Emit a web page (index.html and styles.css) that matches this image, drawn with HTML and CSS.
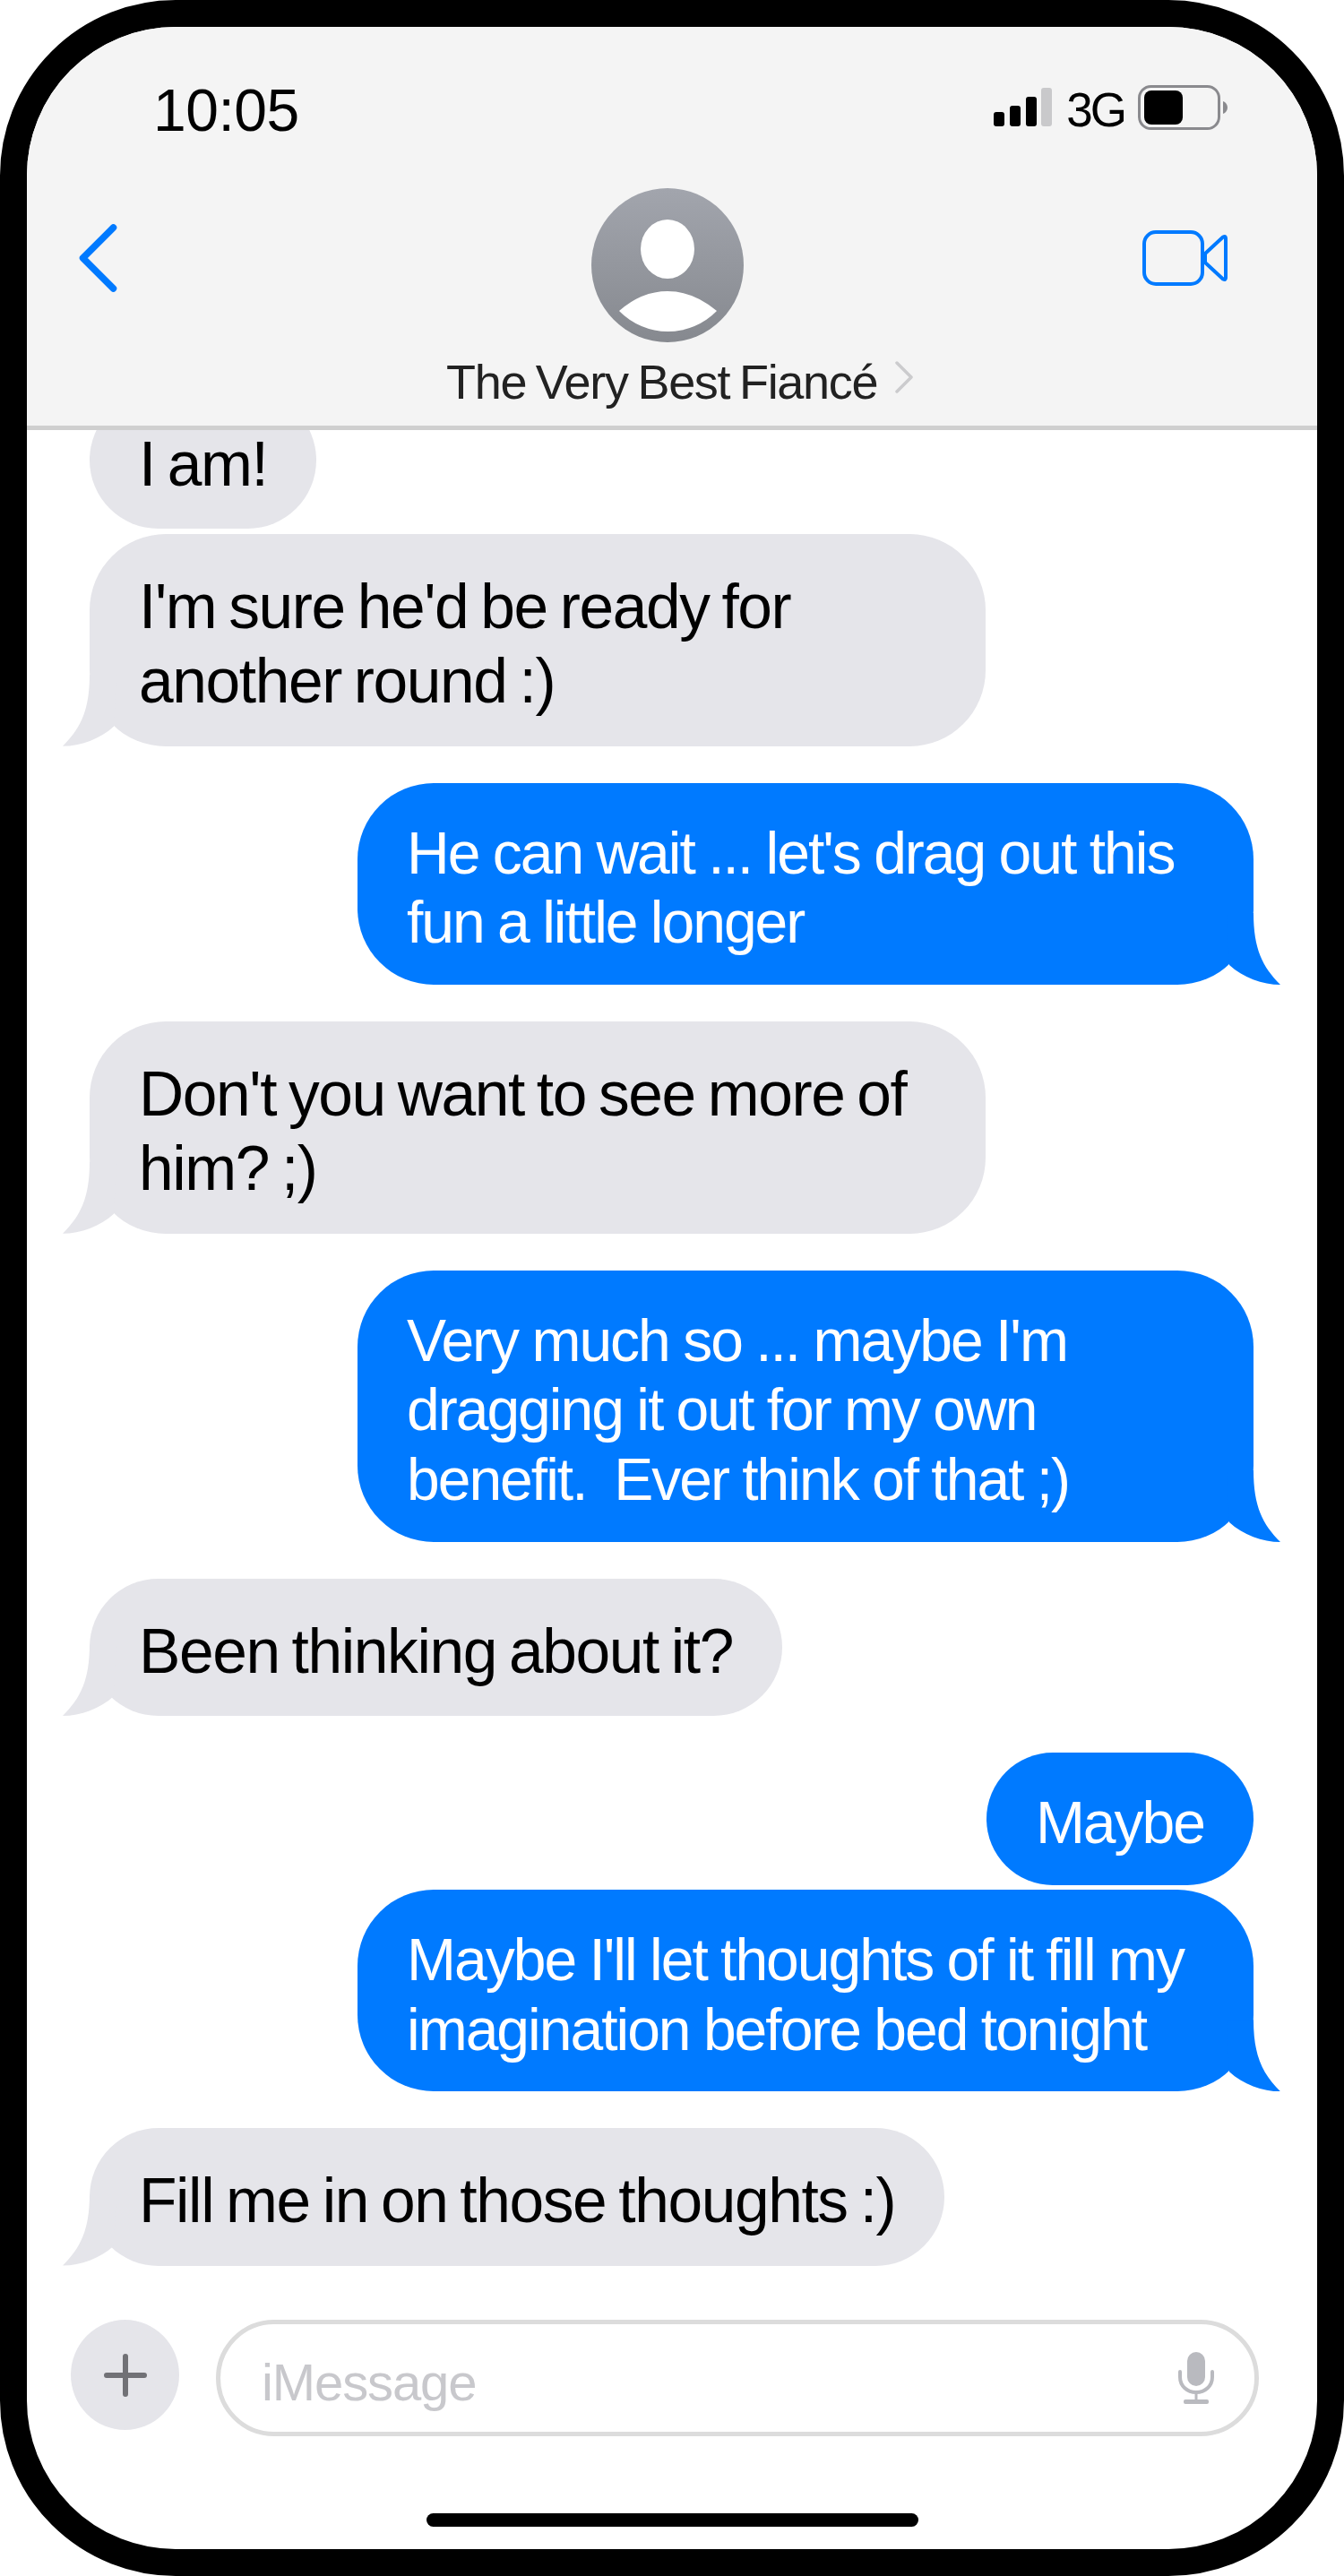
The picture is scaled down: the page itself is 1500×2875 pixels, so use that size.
FILE: index.html
```html
<!DOCTYPE html>
<html lang="en">
<head>
    <meta charset="UTF-8">
    <title>Messages</title>
    <link rel="stylesheet" href="styles.css">
</head>
<body>

<div class="phone">
    <!-- top bar -->
    <header class="topbar">
        <div class="status">
            <span class="time">10:05</span>
            <div class="status-right">
                <svg class="signal" viewBox="0 0 65 43">
                    <rect x="0" y="27" width="12" height="16" rx="3" fill="#000"/>
                    <rect x="18" y="20" width="12" height="23" rx="3" fill="#000"/>
                    <rect x="36" y="10" width="12" height="33" rx="3" fill="#000"/>
                    <rect x="53" y="0" width="12" height="43" rx="3" fill="#c9c9cb"/>
                </svg>
                <span class="network">3G</span>
                <svg class="battery" viewBox="0 0 100 50">
                    <rect x="1.500" y="1.500" width="89" height="47" rx="13" fill="none" stroke="#8a8a8e" stroke-width="3"/>
                    <rect x="7" y="6" width="43" height="38" rx="8" fill="#000"/>
                    <path d="M95 18 C98 19 100 22 100 25 C100 28 98 31 95 32 Z" fill="#8a8a8e"/>
                </svg>
            </div>
        </div>
        <nav class="nav">
            <svg class="back" viewBox="0 0 44 76">
                <path d="M38.500 4 L4.500 38 L38.500 72" fill="none" stroke="#007aff" stroke-width="7.500" stroke-linecap="round" stroke-linejoin="round"/>
            </svg>
            <div class="contact">
                <svg class="avatar" viewBox="0 0 170 172">
                    <defs>
                        <linearGradient id="avatarFill" x1="0" y1="0" x2="0" y2="1">
                            <stop offset="0" stop-color="#a2a5ad"/>
                            <stop offset="1" stop-color="#86898f"/>
                        </linearGradient>
                    </defs>
                    <ellipse cx="85" cy="86" rx="85" ry="86" fill="url(#avatarFill)"/>
                    <ellipse cx="85" cy="68" rx="30" ry="33" fill="#fff"/>
                    <path d="M31 137 Q56 115 85 115 Q114 115 140 137 A76 76 0 0 1 31 137 Z" fill="#fff"/>
                </svg>
                <div class="name-row">
                    <span class="name">The Very Best Fiancé</span>
                    <svg class="name-arrow" viewBox="0 0 20 36">
                        <path d="M2 2 L18 18 L2 34" fill="none" stroke="#cbcbcd" stroke-width="3.500" stroke-linecap="round" stroke-linejoin="round"/>
                    </svg>
                </div>
            </div>
            <svg class="video" viewBox="0 0 95 62">
                <rect x="2" y="2" width="65" height="58" rx="13" fill="none" stroke="#007aff" stroke-width="4"/>
                <path d="M70 26 L90 7.500 Q93 6 93 9 L93 53 Q93 56 90 54.500 L70 36 Z" fill="none" stroke="#007aff" stroke-width="4" stroke-linejoin="round"/>
            </svg>
        </nav>
    </header>

    <!-- conversation -->
    <main class="thread">
        <div class="bubble in first">I am!</div>
        <div class="bubble in wide tail close">I'm sure he'd be ready for another round :)</div>
        <div class="bubble out wide tail">He can wait ... let's drag out this fun a little longer</div>
        <div class="bubble in wide tail">Don't you want to see more of him? ;)</div>
        <div class="bubble out wide tail">Very much so ... maybe I'm dragging it out for my own benefit.&nbsp; Ever think of that ;)</div>
        <div class="bubble in tail">Been thinking about it?</div>
        <div class="bubble out">Maybe</div>
        <div class="bubble out wide tail close">Maybe I'll let thoughts of it fill my imagination before bed tonight</div>
        <div class="bubble in tail">Fill me in on those thoughts :)</div>
    </main>

    <!-- message input -->
    <footer class="composer">
        <div class="composer-row">
            <div class="plus">
                <svg class="plus-icon" viewBox="0 0 48 48">
                    <path d="M24 3 V45 M3 24 H45" fill="none" stroke="#717176" stroke-width="6" stroke-linecap="round"/>
                </svg>
            </div>
            <div class="input">
                <span class="placeholder">iMessage</span>
                <svg class="mic" viewBox="0 0 40 58">
                    <rect x="10" y="0" width="20" height="38" rx="10" fill="#b9babf"/>
                    <path d="M2 22 V28 C2 38 10 45 20 45 C30 45 38 38 38 28 V22" fill="none" stroke="#b9babf" stroke-width="4" stroke-linecap="round"/>
                    <path d="M20 45 V54" fill="none" stroke="#b9babf" stroke-width="3"/>
                    <rect x="6" y="53" width="28" height="5" rx="2" fill="#b9babf"/>
                </svg>
            </div>
        </div>
        <div class="home-bar"></div>
    </footer>
</div>

</body>
</html>
```

FILE: styles.css
```css
body {
    margin: 0;
    background-color: #fff;
    font-family: "Liberation Sans", Arial, sans-serif;
}
.phone {
    width: 1500px;
    height: 2875px;
    box-sizing: border-box;
    border: 30px solid #000;
    border-radius: 196px;
    background-color: #fff;
    overflow: hidden;
    display: flex;
    flex-direction: column;
}

/* top bar */
.topbar {
    flex: none;
    height: 450px;
    box-sizing: border-box;
    background-color: #f4f4f4;
    border-bottom: 5px solid #cfcfcf;
}
.status {
    height: 180px;
    box-sizing: border-box;
    padding: 65px 100px 0 141px;
    display: flex;
    justify-content: space-between;
    align-items: flex-start;
}
.time {
    font-size: 66px;
    line-height: 56px;
    letter-spacing: -0.500px;
    color: #000;
}
.status-right {
    display: flex;
    align-items: flex-start;
}
.signal {
    width: 65px;
    height: 43px;
    margin-top: 3px;
}
.network {
    font-size: 53px;
    line-height: 50px;
    letter-spacing: -3px;
    margin-left: 16px;
    margin-top: 3px;
    color: #000;
}
.battery {
    width: 100px;
    height: 50px;
    margin-left: 15px;
}
.nav {
    display: grid;
    grid-template-columns: 468px 521px 1fr;
}
.back {
    width: 44px;
    height: 76px;
    margin: 40px 0 0 58px;
}
.contact {
    display: flex;
    flex-direction: column;
}
.avatar {
    width: 170px;
    height: 172px;
    margin-left: 162px;
}
.name-row {
    display: flex;
    align-items: center;
    justify-content: space-between;
    margin-top: 14px;
}
.name {
    font-size: 54px;
    line-height: 60px;
    letter-spacing: -1.300px;
    word-spacing: -3px;
    color: #222;
}
.name-arrow {
    width: 20px;
    height: 36px;
    margin-top: -10px;
}
.video {
    width: 95px;
    height: 62px;
    margin: 47px 0 0 256px;
}

/* conversation */
.thread {
    flex: 1;
    min-height: 0;
    overflow: hidden;
    padding: 0 71px 0 70px;
    display: flex;
    flex-direction: column;
    align-items: flex-start;
}
.bubble {
    position: relative;
    box-sizing: border-box;
    border-radius: 85px;
    padding: 40px 55px 30px;
    margin-top: 40.800px;
}
.bubble.first {
    margin-top: -43.500px;
}
.bubble.close {
    margin-top: 5px;
}
.bubble.first + .close {
    margin-top: 6px;
}
.bubble.wide {
    width: 1000px;
}
.in {
    background-color: #e5e5ea;
    color: #000;
    font-size: 69.500px;
    line-height: 83.400px;
    letter-spacing: -1.400px;
    word-spacing: -4px;
}
.out {
    align-self: flex-end;
    background-color: #007aff;
    color: #fff;
    font-size: 66px;
    line-height: 77.800px;
    letter-spacing: -2px;
    word-spacing: -1px;
}
.tail::after {
    content: "";
    position: absolute;
    bottom: 0;
    width: 60px;
    height: 80px;
    background-color: inherit;
    clip-path: path("M30 0 C30 40 20 60 0 80 C20 80 42 72 57 58 L60 0 Z");
}
.in.tail::after {
    left: -30px;
}
.out.tail::after {
    right: -30px;
    transform: scaleX(-1);
}

/* message input */
.composer {
    flex: none;
    padding-bottom: 25px;
}
.composer-row {
    display: flex;
    align-items: flex-start;
    padding-left: 49px;
}
.plus {
    width: 121px;
    height: 123px;
    border-radius: 50%;
    background-color: #e5e5ea;
    display: flex;
    align-items: center;
    justify-content: center;
}
.plus-icon {
    width: 48px;
    height: 48px;
}
.input {
    width: 1164px;
    height: 130px;
    box-sizing: border-box;
    margin-left: 41px;
    padding: 0 45px 0 46px;
    border: 5px solid #dcdcdc;
    border-radius: 65px;
    display: flex;
    align-items: center;
    justify-content: space-between;
}
.placeholder {
    font-size: 58px;
    color: #c8c8cc;
    letter-spacing: -1.100px;
    margin-top: 8px;
}
.mic {
    width: 40px;
    height: 58px;
}
.home-bar {
    width: 549px;
    height: 15px;
    margin: 86px 0 0 446px;
    border-radius: 8px;
    background-color: #000;
}
```
